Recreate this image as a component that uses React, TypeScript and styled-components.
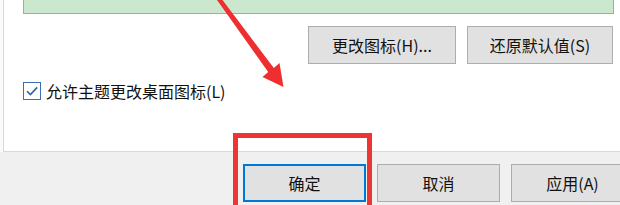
import styled, { createGlobalStyle } from "styled-components";

const GlobalStyle = createGlobalStyle`
	html, body {
		margin: 0;
		padding: 0;
		width: 620px;
		height: 205px;
		overflow: hidden;
		background: #f0f0f0;
		font-family: "Noto Sans CJK SC", "Noto Sans", sans-serif;
	}
`;

const Window = styled.div`
	position: relative;
	width: 620px;
	height: 205px;
	overflow: hidden;
	display: flex;
	flex-direction: column;
	background: #f0f0f0;
`;

const TopArea = styled.div`
	background: #fafafa;
	padding-left: 3px;
`;

const Panel = styled.div`
	height: 151px;
	background: #ffffff;
	border-left: 1px solid #d9d9d9;
	border-bottom: 1px solid #d9d9d9;
	display: flex;
	flex-direction: column;
`;

const Preview = styled.div`
	margin-left: 19px;
	width: 589px;
	height: 13px;
	background: #cbe8cf;
	border: 1px solid #9eaea2;
	border-top: none;
`;

const ButtonRow = styled.div`
	display: flex;
	justify-content: flex-end;
	gap: 11px;
	margin-top: 12px;
	padding-right: 7px;
`;

const Button = styled.button<{ $w: number; $focused?: boolean }>`
	box-sizing: border-box;
	width: ${p => p.$w}px;
	height: 38px;
	padding: 0;
	background: #e1e1e1;
	border: ${p => (p.$focused ? "2px solid #0078d7" : "1px solid #adadad")};
	font-family: "Noto Sans CJK SC", "Noto Sans", sans-serif;
	font-size: 16px;
	line-height: 20px;
	color: #111;
	display: flex;
	align-items: center;
	justify-content: center;
`;

const CheckRow = styled.label`
	display: flex;
	align-items: center;
	gap: 5px;
	margin-top: 18px;
	padding-left: 19px;
	font-size: 16px;
	line-height: 18px;
	color: #111;
`;

const CheckBox = styled.span`
	box-sizing: border-box;
	width: 18px;
	height: 18px;
	border: 1px solid #3a6fb5;
	background: #fff;
	display: flex;
	align-items: center;
	justify-content: center;
`;

const Footer = styled.div`
	display: flex;
	justify-content: flex-end;
	gap: 11px;
	padding-top: 12px;
	margin-right: -14px;
`;

const Highlight = styled.div`
	position: absolute;
	left: 233px;
	top: 133px;
	width: 139px;
	height: 90px;
	box-sizing: border-box;
	border: 5px solid #ee3434;
`;

const Arrow = styled.svg`
	position: absolute;
	left: 0;
	top: 0;
	pointer-events: none;
`;

export default function App() {
	return (
		<>
			<GlobalStyle />
			<Window>
				<TopArea>
					<Panel>
						<Preview />
						<ButtonRow>
							<Button $w={148}>更改图标(H)...</Button>
							<Button $w={146}>还原默认值(S)</Button>
						</ButtonRow>
						<CheckRow>
							<CheckBox>
								<svg width="14" height="14" viewBox="0 0 14 14">
									<path d="M2 7.2 L5.4 10.6 L12.2 3.4" fill="none" stroke="#2a64b0" strokeWidth="1.6" />
								</svg>
							</CheckBox>
							允许主题更改桌面图标(L)
						</CheckRow>
					</Panel>
				</TopArea>
				<Footer>
					<Button $w={123} $focused>确定</Button>
					<Button $w={123}>取消</Button>
					<Button $w={123}>应用(A)</Button>
				</Footer>
				<Highlight />
				<Arrow width="620" height="205" viewBox="0 0 620 205">
					<polygon points="217,0 222.5,0 273.8,67.9 279.5,63 283.5,87 262.5,77 268.2,72.1" fill="#ef2f2f" />
				</Arrow>
			</Window>
		</>
	);
}
